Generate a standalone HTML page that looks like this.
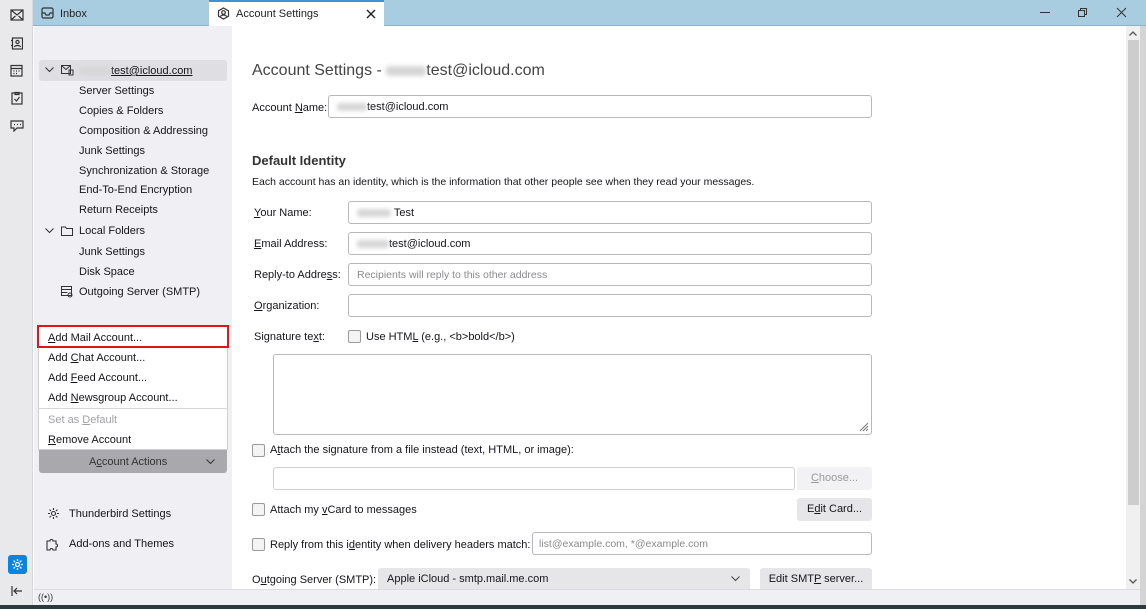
<!DOCTYPE html>
<html><head><meta charset="utf-8"><style>
*{box-sizing:border-box;margin:0;padding:0}
body{width:1146px;height:609px;overflow:hidden;position:relative;font-family:"Liberation Sans",sans-serif;font-size:11px;color:#15141a;background:#fff}
.a{position:absolute;white-space:nowrap}
.blur{display:inline-block;background:#d6d6d6;filter:blur(2px);height:8px;vertical-align:middle;border-radius:3px}
.inp{position:absolute;border:1px solid #b8b8bc;border-radius:3px;background:#fff;height:23px;padding:0 8px;line-height:23px}
.cb{position:absolute;width:13px;height:13px;border:1px solid #9a9a9e;border-radius:2px;background:#f4f4f4}
.btn{position:absolute;background:#e6e6e8;border-radius:3px;height:23px;line-height:23px;text-align:center}
.nav{position:absolute;left:79px}
svg{position:absolute}
</style></head><body>
<div class="a" style="left:0;top:0;width:33px;height:609px;background:#e9e9ec;border-right:1px solid #d8d8dc"></div>
<svg style="left:10px;top:9px" width="14" height="12" viewBox="0 0 14 12" fill="none" stroke="#333" stroke-width="1.2"><rect x="1" y="1" width="12" height="10"/><path d="M1 1l6 5 6-5M1 11l4.5-4M13 11l-4.5-4"/></svg>
<svg style="left:11px;top:37px" width="12" height="13" viewBox="0 0 12 13" fill="none" stroke="#333" stroke-width="1.2"><rect x="1.5" y="1" width="10" height="11"/><circle cx="6.5" cy="5" r="1.6"/><path d="M3.5 10c.5-2 5.5-2 6 0M0 3.5h2M0 8.5h2"/></svg>
<svg style="left:10px;top:64px" width="13" height="13" viewBox="0 0 13 13" fill="none" stroke="#333" stroke-width="1.2"><rect x="1" y="1.5" width="11" height="10.5"/><path d="M1 4.5h11M3.5 7h1M6 7h1M8.5 7h1M3.5 9.5h1M6 9.5h1"/></svg>
<svg style="left:11px;top:91px" width="12" height="14" viewBox="0 0 12 14" fill="none" stroke="#333" stroke-width="1.2"><rect x="1" y="2" width="10" height="11"/><path d="M4 1.5h4v2H4zM3.5 8l2 2 3-4"/></svg>
<svg style="left:10px;top:119px" width="14" height="13" viewBox="0 0 14 13" fill="none" stroke="#333" stroke-width="1.2"><path d="M1 2h12v7H7l-3 3V9H1z"/><path d="M4 5.5h1M7 5.5h1M10 5.5h1"/></svg>
<div class="a" style="left:8px;top:555px;width:19px;height:19px;background:#0a84e0;border-radius:3px"></div>
<svg style="left:11px;top:558px" width="13" height="13" viewBox="0 0 13 13" fill="none" stroke="#fff" stroke-width="1.3"><circle cx="6.5" cy="6.5" r="2"/><path d="M6.5 1v2M6.5 10v2M1 6.5h2M10 6.5h2M2.6 2.6l1.4 1.4M9 9l1.4 1.4M2.6 10.4L4 9M9 4l1.4-1.4"/></svg>
<svg style="left:11px;top:586px" width="12" height="10" viewBox="0 0 12 10" fill="none" stroke="#333" stroke-width="1.2"><path d="M1 0v10M11 5H3M6 2L3 5l3 3"/></svg>
<div class="a" style="left:33px;top:0;width:1113px;height:26px;background:#a9cde0;border-bottom:1px solid #8fb2c4"></div>
<svg style="left:41px;top:7px" width="13" height="12" viewBox="0 0 13 12" fill="none" stroke="#333" stroke-width="1.2"><rect x="1" y="1" width="11" height="10" rx="1.5"/><path d="M1 6h3l1 2h3l1-2h3"/></svg>
<div class="a" style="left:60px;top:8px;color:#222">Inbox</div>
<div class="a" style="left:209px;top:0;width:175px;height:26px;background:#fff;border-top:2px solid #3b93d4"></div>
<svg style="left:217px;top:7px" width="13" height="13" viewBox="0 0 13 13" fill="none" stroke="#333" stroke-width="1.2"><path d="M6.5 1l5 2.8v5.4l-5 2.8-5-2.8V3.8z"/><circle cx="6.5" cy="5.5" r="1.8"/><path d="M3.5 9.5c1-2 5-2 6 0"/></svg>
<div class="a" style="left:236px;top:8px;color:#222">Account Settings</div>
<svg style="left:366px;top:9px" width="10" height="10" viewBox="0 0 10 10" stroke="#222" stroke-width="1.4"><path d="M1 1l8 8M9 1l-8 8"/></svg>
<div class="a" style="left:1040px;top:12px;width:10px;height:1px;background:#333"></div>
<svg style="left:1077px;top:7px" width="11" height="11" viewBox="0 0 11 11" fill="none" stroke="#333"><rect x="1.5" y="3.5" width="6" height="6"/><path d="M3.5 3.5v-2h6v6h-2"/></svg>
<svg style="left:1116px;top:7px" width="11" height="11" viewBox="0 0 11 11" stroke="#333"><path d="M1 1l9 9M10 1l-9 9"/></svg>
<div class="a" style="left:34px;top:26px;width:198px;height:563px;background:#f0f0f4"></div>
<div class="a" style="left:39px;top:60px;width:188px;height:21px;background:#dfdfe3;border-radius:3px"></div>
<svg style="left:45px;top:67px" width="9" height="6" viewBox="0 0 9 6" fill="none" stroke="#333"><path d="M.5.5l4 4 4-4"/></svg>
<svg style="left:61px;top:65px" width="13" height="11" viewBox="0 0 13 11" fill="none" stroke="#333"><rect x="0.5" y="0.5" width="9" height="8"/><path d="M.5 .5l4.5 4 4.5-4M8 5h4v5H8z"/></svg>
<div class="a" style="left:79px;top:65px"><span class="blur" style="width:32px"></span><span style="text-decoration:underline">test@icloud.com</span></div>
<div class="nav" style="top:85px">Server Settings</div>
<div class="nav" style="top:105px">Copies &amp; Folders</div>
<div class="nav" style="top:125px">Composition &amp; Addressing</div>
<div class="nav" style="top:145px">Junk Settings</div>
<div class="nav" style="top:165px">Synchronization &amp; Storage</div>
<div class="nav" style="top:184px">End-To-End Encryption</div>
<div class="nav" style="top:204px">Return Receipts</div>
<svg style="left:45px;top:228px" width="9" height="6" viewBox="0 0 9 6" fill="none" stroke="#333"><path d="M.5.5l4 4 4-4"/></svg>
<svg style="left:61px;top:226px" width="12" height="10" viewBox="0 0 12 10" fill="none" stroke="#333"><path d="M.5 1h4l1 1.5h6V9.5H.5z"/></svg>
<div class="a" style="left:79px;top:225px">Local Folders</div>
<div class="nav" style="top:246px">Junk Settings</div>
<div class="nav" style="top:266px">Disk Space</div>
<svg style="left:61px;top:286px" width="12" height="12" viewBox="0 0 12 12" fill="none" stroke="#333"><rect x=".5" y=".5" width="10" height="9"/><path d="M.5 3.5h10M.5 6.5h6"/><circle cx="9" cy="9" r="2"/></svg>
<div class="nav" style="top:286px">Outgoing Server (SMTP)</div>
<div class="a" style="left:38px;top:326px;width:190px;height:124px;background:#fff;border:1px solid #d0d0d4"></div>
<div class="a" style="left:38px;top:408px;width:190px;height:1px;background:#d6d6da"></div>
<div class="a" style="left:37px;top:325px;width:192px;height:23px;border:2px solid #e5141a"></div>
<div class="a" style="left:48px;top:332px"><u>A</u>dd Mail Account...</div>
<div class="a" style="left:48px;top:352px">Add <u>C</u>hat Account...</div>
<div class="a" style="left:48px;top:372px">Add <u>F</u>eed Account...</div>
<div class="a" style="left:48px;top:392px">Add <u>N</u>ewsgroup Account...</div>
<div class="a" style="left:48px;top:414px;color:#a0a0a4">Set as <u>D</u>efault</div>
<div class="a" style="left:48px;top:434px"><u>R</u>emove Account</div>
<div class="a" style="left:39px;top:450px;width:188px;height:23px;background:#a9a9ad;border-radius:0 0 3px 3px"></div>
<div class="a" style="left:89px;top:456px;color:#333">A<u>c</u>count Actions</div>
<svg style="left:206px;top:459px" width="9" height="6" viewBox="0 0 9 6" fill="none" stroke="#333"><path d="M.5.5l4 4 4-4"/></svg>
<svg style="left:47px;top:507px" width="13" height="13" viewBox="0 0 13 13" fill="none" stroke="#333" stroke-width="1.1"><circle cx="6.5" cy="6.5" r="2"/><path d="M6.5 1v2M6.5 10v2M1 6.5h2M10 6.5h2M2.6 2.6l1.4 1.4M9 9l1.4 1.4M2.6 10.4L4 9M9 4l1.4-1.4"/></svg>
<div class="a" style="left:69px;top:508px">Thunderbird Settings</div>
<svg style="left:46px;top:537px" width="14" height="14" viewBox="0 0 14 14" fill="none" stroke="#333" stroke-width="1.1"><path d="M1 4h3a1.5 1.5 0 1 1 3 0h3v3a1.5 1.5 0 1 1 0 3v3H7a1.5 1.5 0 1 0-3 0H1z"/></svg>
<div class="a" style="left:69px;top:538px">Add-ons and Themes</div>
<div class="a" style="left:34px;top:589px;width:1112px;height:16px;background:#f0f0f4;border-top:1px solid #dcdce0"></div>
<div class="a" style="left:38px;top:592px;font-size:9px;color:#333">((•))</div>
<div class="a" style="left:0;top:605px;width:1146px;height:4px;background:#2b3a3e"></div>
<div class="a" style="left:1126px;top:26px;width:14px;height:563px;background:#f0f0f0"></div>
<div class="a" style="left:1128px;top:40px;width:11px;height:465px;background:#cdcdcd"></div>
<svg style="left:1129px;top:31px" width="8" height="5" viewBox="0 0 8 5" fill="none" stroke="#555" stroke-width="1.3"><path d="M.5 4.5l3.5-3.5 3.5 3.5"/></svg>
<svg style="left:1129px;top:579px" width="8" height="5" viewBox="0 0 8 5" fill="none" stroke="#555" stroke-width="1.3"><path d="M.5.5l3.5 3.5 3.5-3.5"/></svg>
<div class="a" style="left:1140px;top:26px;width:6px;height:579px;background:#d4d4d4"></div>
<div class="a" style="left:252px;top:62px;font-size:16px;color:#444">Account Settings - <span class="blur" style="width:40px;height:10px"></span>test@icloud.com</div>
<div class="a" style="left:252px;top:102px">Account <u>N</u>ame:</div>
<div class="inp" style="left:328px;top:95px;width:544px"><span class="blur" style="width:30px"></span>test@icloud.com</div>
<div class="a" style="left:252px;top:153px;font-size:13px;font-weight:bold;color:#333">Default Identity</div>
<div class="a" style="left:252px;top:176px;font-size:10.5px">Each account has an identity, which is the information that other people see when they read your messages.</div>
<div class="a" style="left:254px;top:207px"><u>Y</u>our Name:</div>
<div class="inp" style="left:348px;top:201px;width:524px"><span class="blur" style="width:34px"></span> Test</div>
<div class="a" style="left:254px;top:238px"><u>E</u>mail Address:</div>
<div class="inp" style="left:348px;top:232px;width:524px"><span class="blur" style="width:32px"></span>test@icloud.com</div>
<div class="a" style="left:254px;top:269px">Reply-to Addre<u>s</u>s:</div>
<div class="inp" style="left:348px;top:263px;width:524px;color:#8a8a8e;font-size:10.5px">Recipients will reply to this other address</div>
<div class="a" style="left:254px;top:300px"><u>O</u>rganization:</div>
<div class="inp" style="left:348px;top:294px;width:524px"></div>
<div class="a" style="left:254px;top:331px">Signature te<u>x</u>t:</div>
<div class="cb" style="left:348px;top:330px"></div>
<div class="a" style="left:366px;top:331px">Use HTM<u>L</u> (e.g., &lt;b&gt;bold&lt;/b&gt;)</div>
<div class="a" style="left:273px;top:354px;width:599px;height:81px;border:1px solid #b8b8bc;border-radius:3px"></div>
<svg style="left:859px;top:422px" width="10" height="10" viewBox="0 0 10 10" stroke="#777"><path d="M9 1L1 9M9 4L4 9M9 7L7 9"/></svg>
<div class="cb" style="left:252px;top:444px"></div>
<div class="a" style="left:270px;top:444px">A<u>t</u>tach the signature from a file instead (text, HTML, or image):</div>
<div class="inp" style="left:273px;top:467px;width:522px;border-color:#d0d0d4"></div>
<div class="btn" style="left:797px;top:467px;width:75px;background:#f2f2f4;color:#9a9a9e"><u>C</u>hoose...</div>
<div class="cb" style="left:252px;top:503px"></div>
<div class="a" style="left:270px;top:504px">Attach my <u>v</u>Card to messages</div>
<div class="btn" style="left:797px;top:498px;width:75px">E<u>d</u>it Card...</div>
<div class="cb" style="left:252px;top:538px"></div>
<div class="a" style="left:270px;top:539px">Reply from this i<u>d</u>entity when delivery headers match:</div>
<div class="inp" style="left:532px;top:532px;width:340px;color:#8a8a8e;font-size:10.5px;padding-left:6px">list@example.com, *@example.com</div>
<div class="a" style="left:252px;top:574px">O<u>u</u>tgoing Server (SMTP):</div>
<div class="btn" style="left:378px;top:568px;width:372px;text-align:left;padding-left:9px;height:21px;border-radius:3px 3px 0 0">Apple iCloud - smtp.mail.me.com</div>
<svg style="left:731px;top:576px" width="9" height="6" viewBox="0 0 9 6" fill="none" stroke="#444"><path d="M.5.5l4 4 4-4"/></svg>
<div class="btn" style="left:760px;top:568px;width:112px;height:21px;border-radius:3px 3px 0 0">Edit SMT<u>P</u> server...</div>
</body></html>
